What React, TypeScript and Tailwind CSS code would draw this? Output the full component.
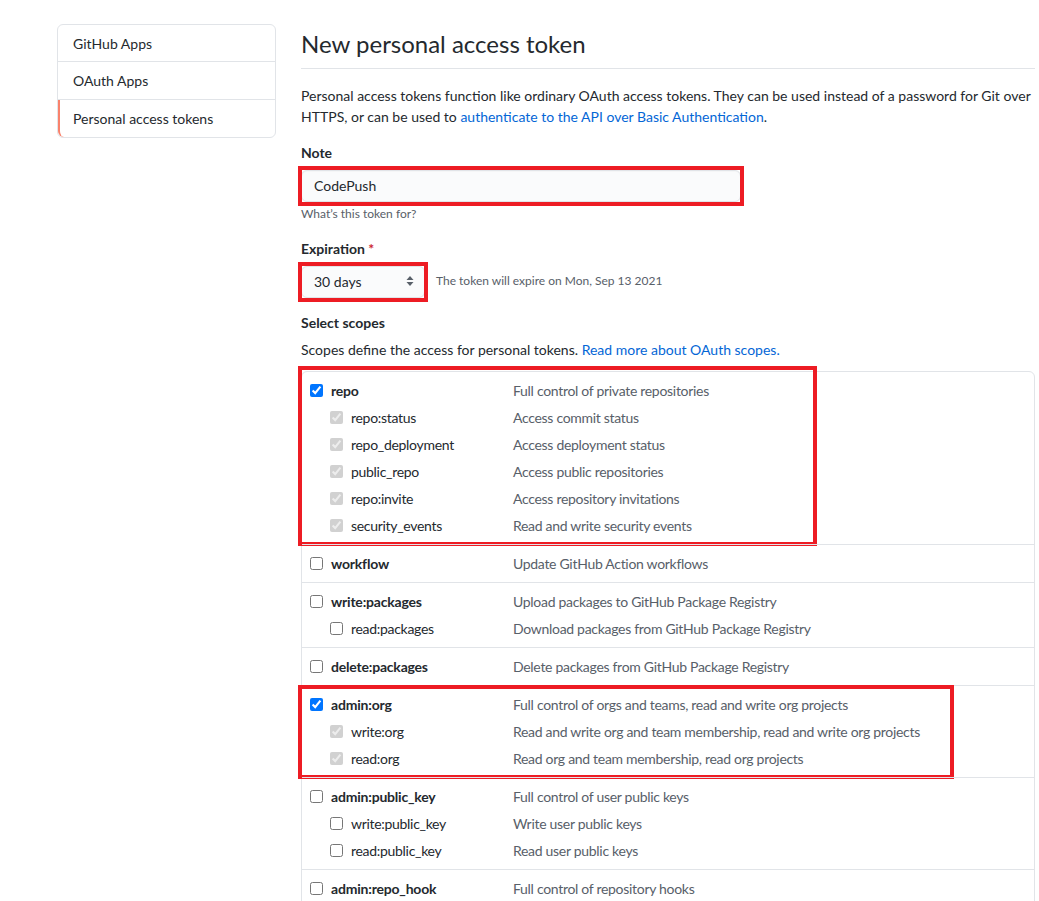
import React from "react";

type Scope = {
  name: string;
  desc: string;
  checked?: boolean;
  children?: [string, string][];
  mark?: "repo" | "org";
};

const scopes: Scope[] = [
  {
    name: "repo",
    desc: "Full control of private repositories",
    checked: true,
    mark: "repo",
    children: [
      ["repo:status", "Access commit status"],
      ["repo_deployment", "Access deployment status"],
      ["public_repo", "Access public repositories"],
      ["repo:invite", "Access repository invitations"],
      ["security_events", "Read and write security events"],
    ],
  },
  { name: "workflow", desc: "Update GitHub Action workflows" },
  {
    name: "write:packages",
    desc: "Upload packages to GitHub Package Registry",
    children: [["read:packages", "Download packages from GitHub Package Registry"]],
  },
  { name: "delete:packages", desc: "Delete packages from GitHub Package Registry" },
  {
    name: "admin:org",
    desc: "Full control of orgs and teams, read and write org projects",
    checked: true,
    mark: "org",
    children: [
      ["write:org", "Read and write org and team membership, read and write org projects"],
      ["read:org", "Read org and team membership, read org projects"],
    ],
  },
  {
    name: "admin:public_key",
    desc: "Full control of user public keys",
    children: [
      ["write:public_key", "Write user public keys"],
      ["read:public_key", "Read user public keys"],
    ],
  },
  {
    name: "admin:repo_hook",
    desc: "Full control of repository hooks",
    children: [
      ["write:repo_hook", "Write repository hooks"],
      ["read:repo_hook", "Read repository hooks"],
    ],
  },
];

const Box = ({ checked, disabled }: { checked?: boolean; disabled?: boolean }) => (
  <input
    type="checkbox"
    checked={!!checked}
    disabled={disabled}
    readOnly
    className="m-0 w-[13px] h-[13px] shrink-0"
  />
);

const ScopeGroup = ({ scope, first }: { scope: Scope; first: boolean }) => {
  const parentChecked = !!scope.checked;
  return (
    <div className={`relative py-[5px] ${first ? "" : "border-t border-[#e1e4e8]"}`}>
      <div className="flex items-center h-[27px] pl-[8px] pb-[1px]">
        <div className="flex items-center w-[203px] shrink-0">
          <Box checked={parentChecked} />
          <span className="ml-[8px] font-bold text-[#24292e] tracking-[-0.2px]">{scope.name}</span>
        </div>
        <span className="text-[#586069] tracking-[-0.3px]">{scope.desc}</span>
      </div>
      {scope.children?.map(([n, d]) => (
        <div key={n} className="flex items-center h-[27px] pl-[28px] pb-[1px]">
          <div className="flex items-center w-[183px] shrink-0">
            <Box checked={parentChecked} disabled={parentChecked} />
            <span className="ml-[8px] text-[#24292e] tracking-[-0.3px]">{n}</span>
          </div>
          <span className="text-[#586069] tracking-[-0.3px]">{d}</span>
        </div>
      ))}
      {scope.mark === "repo" && (
        <div className="pointer-events-none absolute left-[-4px] top-[-6px] w-[519px] bottom-[-2px] border-[4px] border-[#ed1c24]" />
      )}
      {scope.mark === "org" && (
        <div className="pointer-events-none absolute left-[-4px] top-[-1px] w-[656px] bottom-[-2px] border-[4px] border-[#ed1c24]" />
      )}
    </div>
  );
};

export default function App() {
  return (
    <div
      className="min-h-screen bg-white text-[14px] text-[#24292e] overflow-hidden"
      style={{ fontFamily: '"Segoe UI", Lato, "Noto Sans", "Liberation Sans", sans-serif' }}
    >
      <div className="flex pt-[24px] pl-[57px] gap-[25px]">
        {/* sidebar */}
        <nav className="w-[219px] shrink-0 self-start border border-[#e1e4e8] rounded-md bg-white">
          <div className="h-[37px] flex items-center pl-[15px] border-b border-[#e1e4e8]">GitHub Apps</div>
          <div className="h-[38px] flex items-center pl-[15px] border-b border-[#e1e4e8]">OAuth Apps</div>
          <div className="h-[37px] flex items-center pl-[13px] border-l-2 border-[#f9826c] rounded-bl-md">
            Personal access tokens
          </div>
        </nav>

        {/* main */}
        <main className="w-[734px] shrink-0">
          <div className="border-b border-[#e1e4e8] pb-[4px]">
            <h1 className="text-[24px] leading-[40px] font-normal">New personal access token</h1>
          </div>

          <p className="mt-[16px] leading-[21px] whitespace-nowrap">
            Personal access tokens function like ordinary OAuth access tokens. They can be used instead of a password for Git over
            <br />
            HTTPS, or can be used to{" "}
            <a className="text-[#0366d6]">authenticate to the API over Basic Authentication</a>.
          </p>

          <div className="mt-[15px]">
            <div className="font-bold leading-[21px]">Note</div>
            <div className="relative mt-[7px] w-[440px]">
              <div className="h-[32px] flex items-center px-[12px] pb-[1px] bg-[#fafbfc] border border-[#e1e4e8] rounded-md shadow-[inset_0_1px_0_rgba(225,228,232,0.2)]">
                CodePush
              </div>
              <div className="pointer-events-none absolute left-[-3px] right-[-3px] top-[-4px] bottom-[-4px] border-[4px] border-[#ed1c24]" />
            </div>
            <div className="mt-[3px] text-[12px] leading-[18px] text-[#586069]">What’s this token for?</div>
          </div>

          <div className="mt-[15px]">
            <div className="font-bold leading-[21px]">
              Expiration <span className="text-[#cb2431]">*</span>
            </div>
            <div className="mt-[7px] flex items-center">
              <div className="relative w-[124px]">
                <div className="h-[32px] flex items-center justify-between pl-[12px] pr-[10px] pb-[2px] bg-[#fafbfc] border border-[#e1e4e8] rounded-md">
                  <span>30 days</span>
                  <svg width="8" height="12" viewBox="0 0 8 12" fill="#586069">
                    <path d="M4 1 L7.5 5 L0.5 5 Z" />
                    <path d="M4 11 L7.5 7 L0.5 7 Z" />
                  </svg>
                </div>
                <div className="pointer-events-none absolute left-[-3px] right-[-3px] top-[-4px] bottom-[-4px] border-[4px] border-[#ed1c24]" />
              </div>
              <span className="ml-[11px] pb-[2px] text-[12px] text-[#586069]">The token will expire on Mon, Sep 13 2021</span>
            </div>
          </div>

          <div className="mt-[14px] font-bold leading-[21px]">Select scopes</div>
          <p className="mt-[6px] leading-[21px]">
            Scopes define the access for personal tokens. <a className="text-[#0366d6]">Read more about OAuth scopes.</a>
          </p>

          <div className="mt-[11px] border border-[#e1e4e8] rounded-md">
            {scopes.map((s, i) => (
              <ScopeGroup key={s.name} scope={s} first={i === 0} />
            ))}
          </div>
        </main>
      </div>
    </div>
  );
}
